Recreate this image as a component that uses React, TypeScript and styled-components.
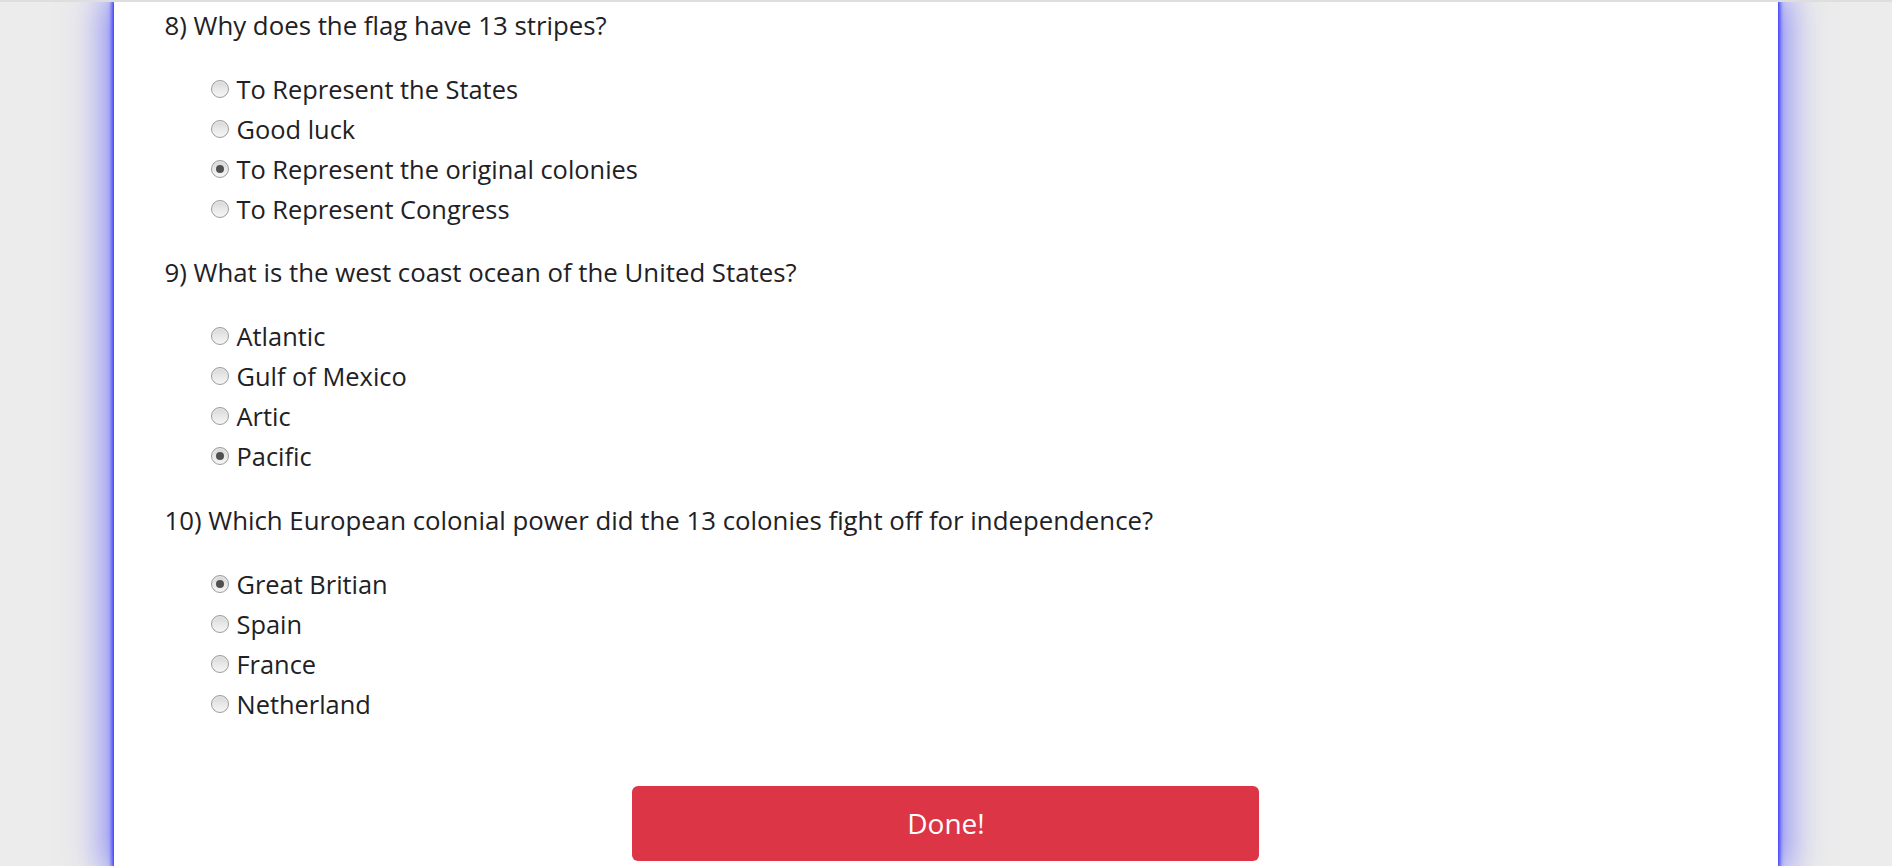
import React from "react";
import styled, { createGlobalStyle } from "styled-components";

const GlobalStyle = createGlobalStyle`
  html, body {
    margin: 0;
    padding: 0;
    background: #ececec;
    overflow: hidden;
  }
  body {
    font-family: "Open Sans", "Noto Sans", Arial, sans-serif;
    color: #1e2125;
  }
`;

const Page = styled.div`
  min-height: 866px;
  display: flex;
  flex-direction: column;
`;

const TopRule = styled.div`
  height: 2px;
  background: #dedede;
  position: relative;
  z-index: 2;
`;

const Container = styled.main`
  width: 88%;
  margin: 0 auto;
  flex: 1;
  background: #ffffff;
  box-shadow: 0 0 4px 2px rgb(55, 55, 255), 0 0 36px 8px rgba(70, 70, 255, 0.68);
  padding: 4.5px 0 0 51px;
  box-sizing: border-box;
`;

const QuestionBlock = styled.section`
  padding-bottom: 25.5px;
  &:last-of-type {
    padding-bottom: 0;
  }
`;

const QuestionText = styled.p`
  margin: 0 0 26px 0;
  font-size: 25.8px;
  line-height: 36px;
`;

const OptionList = styled.div`
  display: flex;
  flex-direction: column;
  padding-left: 46px;
`;

const OptionRow = styled.label`
  display: flex;
  align-items: center;
  height: 40px;
  font-size: 25.4px;
  gap: 8px;
  cursor: pointer;
`;

const RadioDot = styled.span<{ $checked: boolean }>`
  width: 18px;
  height: 18px;
  border-radius: 50%;
  box-sizing: border-box;
  border: 1px solid #9c9c9c;
  background: linear-gradient(180deg, #d6d6d6 0%, #e8e8e8 50%, #f6f6f6 100%);
  box-shadow: inset 0 1px 1px rgba(255, 255, 255, 0.5);
  display: flex;
  align-items: center;
  justify-content: center;
  flex-shrink: 0;
  &::after {
    content: "";
    width: 8px;
    height: 8px;
    border-radius: 50%;
    background: #505050;
    display: ${(p) => (p.$checked ? "block" : "none")};
  }
`;

const ButtonRow = styled.div`
  display: flex;
  justify-content: center;
  padding: 62px 51px 0 0;
`;

const DoneButton = styled.button`
  width: 627px;
  height: 75px;
  border: none;
  border-radius: 6px;
  background: #dc3545;
  color: #ffffff;
  font-family: "Open Sans", "Noto Sans", Arial, sans-serif;
  font-size: 28px;
  cursor: pointer;
`;

type Question = { n: number; text: string; options: string[]; picked: number };

const questions: Question[] = [
  {
    n: 8,
    text: "Why does the flag have 13 stripes?",
    options: [
      "To Represent the States",
      "Good luck",
      "To Represent the original colonies",
      "To Represent Congress",
    ],
    picked: 2,
  },
  {
    n: 9,
    text: "What is the west coast ocean of the United States?",
    options: ["Atlantic", "Gulf of Mexico", "Artic", "Pacific"],
    picked: 3,
  },
  {
    n: 10,
    text: "Which European colonial power did the 13 colonies fight off for independence?",
    options: ["Great Britian", "Spain", "France", "Netherland"],
    picked: 0,
  },
];

export default function App() {
  return (
    <>
      <GlobalStyle />
      <Page>
        <TopRule />
        <Container>
          {questions.map((q) => (
            <QuestionBlock key={q.n}>
              <QuestionText>
                {q.n}) {q.text}
              </QuestionText>
              <OptionList>
                {q.options.map((o, i) => (
                  <OptionRow key={o}>
                    <RadioDot $checked={i === q.picked} />
                    {o}
                  </OptionRow>
                ))}
              </OptionList>
            </QuestionBlock>
          ))}
          <ButtonRow>
            <DoneButton>Done!</DoneButton>
          </ButtonRow>
        </Container>
      </Page>
    </>
  );
}
